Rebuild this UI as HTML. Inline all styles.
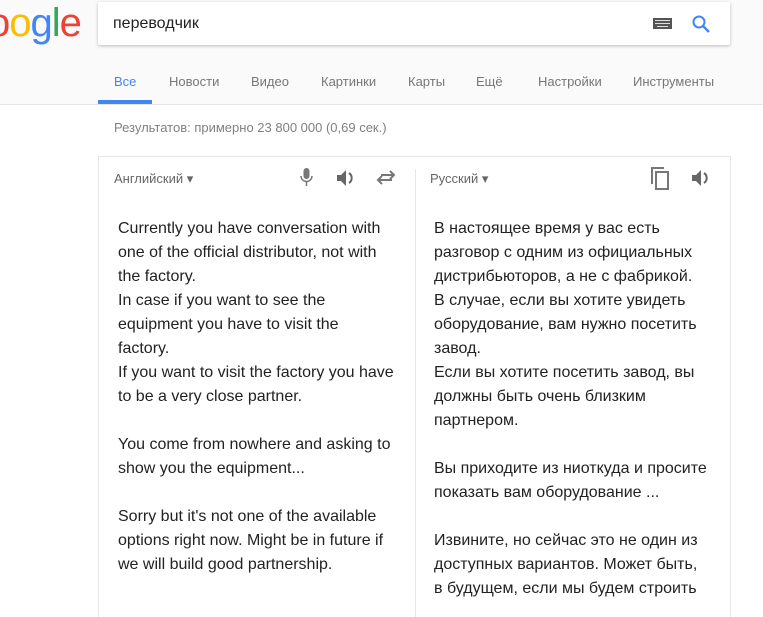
<!DOCTYPE html>
<html><head><meta charset="utf-8"><style>
body{margin:0;width:763px;height:606px;overflow:hidden;background:#fff;font-family:"Liberation Sans",Arial,sans-serif;position:relative}
.hdr{position:absolute;left:0;top:0;width:763px;height:104px;background:#fafafa;border-bottom:1px solid #e5e5e5}
.logo{position:absolute;left:-12px;top:1px;font-size:40px;letter-spacing:-1px;font-weight:normal}
.sb{position:absolute;left:98px;top:2px;width:632px;height:43px;background:#fff;box-shadow:0 1px 3px rgba(0,0,0,.25);border-radius:2px}
.sb .q{position:absolute;left:15px;top:13px;font-size:16px;color:#222}
.nav{position:absolute;top:74px;font-size:13px;color:#777}
.res{position:absolute;left:114px;top:120px;font-size:13px;color:#808080}
.box{position:absolute;left:98px;top:156px;width:631px;height:460px;border:1px solid #e6e6e6;border-bottom:none;overflow:hidden}
.div{position:absolute;left:316px;top:12px;width:1px;height:460px;background:#e6e6e6}
.lang{position:absolute;top:14px;font-size:13px;color:#666}
.txt{position:absolute;top:60px;font-size:16px;line-height:24px;color:#222;white-space:nowrap}
</style></head><body>
<div class="hdr">
<div class="logo"><span style="color:#ea4335">o</span><span style="color:#fbbc05">o</span><span style="color:#4285f4">g</span><span style="color:#34a853">l</span><span style="color:#ea4335">e</span></div>
<div class="sb"><div class="q">переводчик</div>
<svg style="position:absolute;left:555px;top:16px" width="19" height="11"><rect width="19" height="11" fill="#555"/><g fill="#ddd"><rect x="2" y="2" width="15" height="1"/><rect x="2" y="5" width="15" height="1"/><rect x="4" y="8" width="11" height="1"/></g></svg>
<svg style="position:absolute;left:593px;top:12px" width="20" height="20"><circle cx="8" cy="8" r="5.5" fill="none" stroke="#4285f4" stroke-width="2"/><line x1="12" y1="12" x2="18" y2="18" stroke="#4285f4" stroke-width="2.4"/></svg>
</div>
<div class="nav" style="left:114px;color:#4285f4">Все</div>
<div style="position:absolute;left:98px;top:100px;width:54px;height:4px;background:#4285f4"></div>
<div class="nav" style="left:169px">Новости</div>
<div class="nav" style="left:251px">Видео</div>
<div class="nav" style="left:321px">Картинки</div>
<div class="nav" style="left:408px">Карты</div>
<div class="nav" style="left:476px">Ещё</div>
<div class="nav" style="left:538px">Настройки</div>
<div class="nav" style="left:633px">Инструменты</div>
</div>
<div class="res">Результатов: примерно 23 800 000 (0,69 сек.)</div>
<div class="box">
<div class="div"></div>
<div class="lang" style="left:15px">Английский &#9662;</div>
<svg style="position:absolute;left:200px;top:10px" width="16" height="22"><rect x="4.5" y="1" width="6" height="11" rx="3" fill="#777"/><path d="M2 9a5.5 5.5 0 0 0 11 0" fill="none" stroke="#777" stroke-width="1.5"/><line x1="7.5" y1="14" x2="7.5" y2="19" stroke="#777" stroke-width="1.5"/></svg>
<svg style="position:absolute;left:236px;top:10px" width="22" height="22"><path d="M2 8h4l5-5v16l-5-5H2z" fill="#666"/><path d="M14 6a6 6 0 0 1 0 10" fill="none" stroke="#666" stroke-width="2"/></svg>
<svg style="position:absolute;left:276px;top:11px" width="22" height="20"><path d="M3 12h14M7 8l-4 4 4 4" fill="none" stroke="#777" stroke-width="2"/><path d="M19 7H6M15 3l4 4-4 4" fill="none" stroke="#777" stroke-width="2"/></svg>
<div class="lang" style="left:331px">Русский &#9662;</div>
<svg style="position:absolute;left:550px;top:8px" width="24" height="26"><path d="M3 19V3h12" fill="none" stroke="#777" stroke-width="2"/><rect x="7" y="7" width="12" height="17" fill="none" stroke="#777" stroke-width="2"/></svg>
<svg style="position:absolute;left:591px;top:10px" width="22" height="22"><path d="M2 8h4l5-5v16l-5-5H2z" fill="#666"/><path d="M14 6a6 6 0 0 1 0 10" fill="none" stroke="#666" stroke-width="2"/></svg>
<div class="txt" style="left:19px">Currently you have conversation with<br>one of the official distributor, not with<br>the factory.<br>In case if you want to see the<br>equipment you have to visit the<br>factory.<br>If you want to visit the factory you have<br>to be a very close partner.<br><br>You come from nowhere and asking to<br>show you the equipment...<br><br>Sorry but it's not one of the available<br>options right now. Might be in future if<br>we will build good partnership.</div>
<div class="txt" style="left:335px">В настоящее время у вас есть<br>разговор с одним из официальных<br>дистрибьюторов, а не с фабрикой.<br>В случае, если вы хотите увидеть<br>оборудование, вам нужно посетить<br>завод.<br>Если вы хотите посетить завод, вы<br>должны быть очень близким<br>партнером.<br><br>Вы приходите из ниоткуда и просите<br>показать вам оборудование ...<br><br>Извините, но сейчас это не один из<br>доступных вариантов. Может быть,<br>в будущем, если мы будем строить</div>
</div>
</body></html>
